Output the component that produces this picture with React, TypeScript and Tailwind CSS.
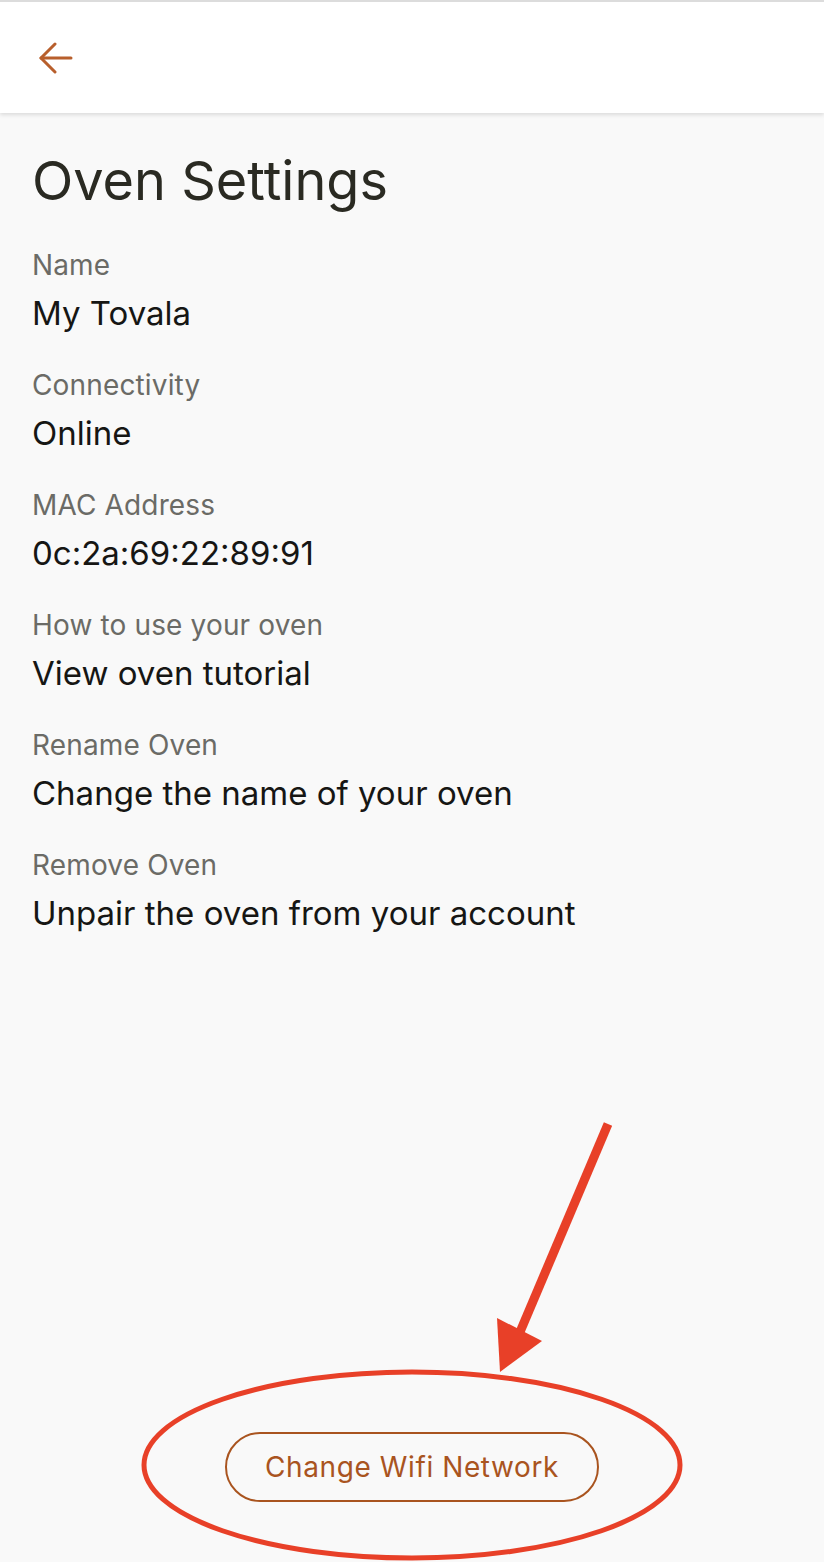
import React from "react";

const items = [
  { label: "Name", value: "My Tovala" },
  { label: "Connectivity", value: "Online" },
  { label: "MAC Address", value: "0c:2a:69:22:89:91" },
  { label: "How to use your oven", value: "View oven tutorial" },
  { label: "Rename Oven", value: "Change the name of your oven" },
  { label: "Remove Oven", value: "Unpair the oven from your account" },
];

export default function App() {
  return (
    <div
      className="relative flex h-[1562px] w-full flex-col bg-[#f9f9f9]"
      style={{ fontFamily: "Inter, 'Noto Sans', sans-serif" }}
    >
      <header className="flex h-[113px] items-center border-t-2 border-[#dcdcdc] bg-white pl-[39px] shadow-[0_2px_4px_rgba(0,0,0,0.12)]">
        <svg width="34" height="32" viewBox="0 0 34 32" fill="none" stroke="#b85f2c" strokeWidth="3" strokeLinecap="round" strokeLinejoin="round">
          <path d="M16 2 L2 16 L16 30" />
          <path d="M2 16 H32" />
        </svg>
      </header>

      <main className="flex flex-1 flex-col px-[32px] pt-[38px]">
        <h1 className="text-[54px] leading-[60px] font-normal text-[#2a2a22] tracking-[0px]">
          Oven Settings
        </h1>
        <div className="mt-[36px] flex flex-col gap-[34px]">
          {items.map((it) => (
            <div key={it.label} className="flex flex-col">
              <span className="text-[28px] leading-[36px] text-[#6b6b66] tracking-[0.15px]">{it.label}</span>
              <span className="mt-[10px] text-[33px] leading-[40px] text-[#161614]">{it.value}</span>
            </div>
          ))}
        </div>

        <div className="mt-auto mb-[60px] flex justify-center">
          <button className="flex h-[70px] w-[374px] items-center justify-center rounded-full border-2 border-[#a9541f] text-[28px] tracking-[0.6px] text-[#a9541f]">
            Change Wifi Network
          </button>
        </div>
      </main>

      <svg
        className="pointer-events-none absolute left-0 top-0"
        width="824"
        height="1562"
        viewBox="0 0 824 1562"
      >
        <ellipse cx="412" cy="1465" rx="268" ry="93" fill="none" stroke="#e84028" strokeWidth="5" />
        <line x1="608" y1="1124" x2="520" y2="1332" stroke="#e84028" strokeWidth="9" />
        <polygon points="497,1318 542,1341 500,1372" fill="#e84028" />
      </svg>
    </div>
  );
}
